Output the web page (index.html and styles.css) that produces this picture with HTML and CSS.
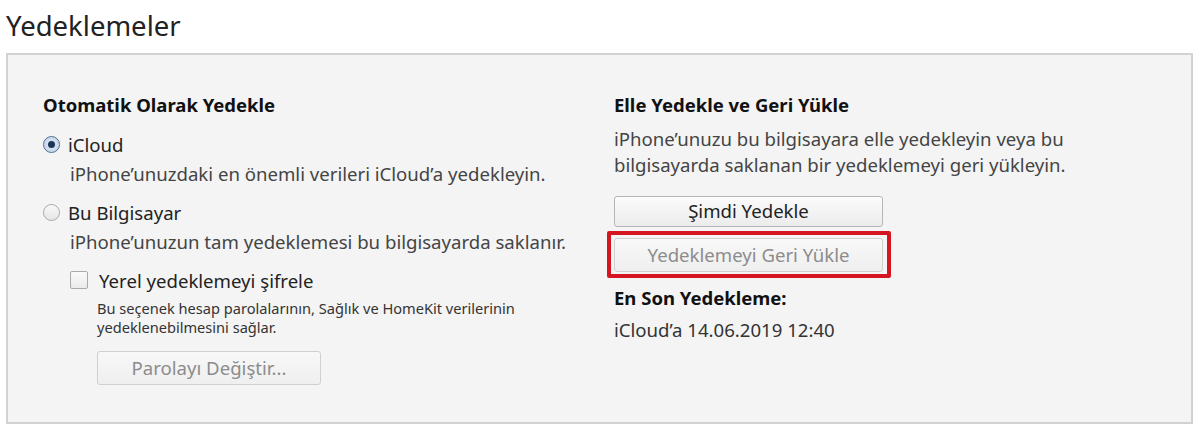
FILE: index.html
```html
<!DOCTYPE html>
<html lang="tr">
<head>
<meta charset="utf-8">
<link rel="stylesheet" href="styles.css">
</head>
<body>
<h1 class="title">Yedeklemeler</h1>
<div class="panel">
  <div class="col left">
    <h2 class="heading">Otomatik Olarak Yedekle</h2>
    <div class="radio-row first">
      <span class="radio checked"><span class="dot"></span></span>
      <span class="label">iCloud</span>
    </div>
    <p class="desc">iPhone’unuzdaki en önemli verileri iCloud’a yedekleyin.</p>
    <div class="radio-row second">
      <span class="radio"></span>
      <span class="label">Bu Bilgisayar</span>
    </div>
    <p class="desc">iPhone’unuzun tam yedeklemesi bu bilgisayarda saklanır.</p>
    <div class="check-row">
      <span class="checkbox"></span>
      <span class="label">Yerel yedeklemeyi şifrele</span>
    </div>
    <p class="small">Bu seçenek hesap parolalarının, Sağlık ve HomeKit verilerinin<br>yedeklenebilmesini sağlar.</p>
    <button class="btn disabled pw">Parolayı Değiştir...</button>
  </div>
  <div class="col right">
    <h2 class="heading">Elle Yedekle ve Geri Yükle</h2>
    <p class="para">iPhone’unuzu bu bilgisayara elle yedekleyin veya bu<br>bilgisayarda saklanan bir yedeklemeyi geri yükleyin.</p>
    <button class="btn wide now">Şimdi Yedekle</button>
    <div class="highlight">
      <button class="btn wide disabled">Yedeklemeyi Geri Yükle</button>
    </div>
    <h2 class="heading last">En Son Yedekleme:</h2>
    <p class="para date">iCloud’a 14.06.2019 12:40</p>
  </div>
</div>
</body>
</html>
```
FILE: styles.css
```css
* { box-sizing: border-box; }
html, body { margin: 0; padding: 0; background: #fff; }
body {
  font-family: "Noto Sans", "Open Sans", sans-serif;
  color: #222;
  width: 1200px;
  height: 434px;
  overflow: hidden;
}
.title {
  margin: 0;
  padding: 8px 0 0 6px;
  height: 44px;
  font-weight: 400;
  font-size: 27.5px;
  line-height: 36px;
  color: #222;
}
.panel {
  margin: 9px 0 0 6px;
  width: 1187px;
  height: 371px;
  background: #f4f4f4;
  border: 2px solid #d2d2d2;
  display: flex;
  padding: 37px 0 0 35px;
}
.col { display: flex; flex-direction: column; align-items: flex-start; }
.left { width: 571px; }
.heading {
  margin: 0;
  font-size: 18.5px;
  font-weight: 700;
  line-height: 26px;
  color: #111;
}
.radio-row, .check-row {
  display: flex;
  align-items: center;
  gap: 8px;
  height: 26px;
}
.radio-row.first { margin-top: 13px; }
.radio-row.second { margin-top: 12px; }
.radio {
  width: 17px; height: 17px;
  border-radius: 50%;
  border: 1px solid #a8a8a8;
  background: linear-gradient(#f8f8f8, #e6e6e6);
  display: flex; align-items: center; justify-content: center;
}
.radio.checked {
  border-color: #4f6f95;
  background: radial-gradient(circle, #dfe9f5 0, #bfd1e6 100%);
}
.dot {
  width: 7px; height: 7px; border-radius: 50%;
  background: #1c3554;
}
.label { font-size: 18.6px; color: #222; }
.desc {
  margin: 4px 0 0 27px;
  font-size: 18.6px;
  line-height: 26px;
  color: #444;
}
.check-row { margin: 12px 0 0 27px; gap: 11px; }
.checkbox {
  width: 18px; height: 18px;
  border: 1px solid #a9a9a9;
  border-radius: 2px;
  background: linear-gradient(#fafafa, #ebebeb);
}
.small {
  margin: 6px 0 0 54px;
  font-size: 14.6px;
  line-height: 19px;
  color: #333;
}
.btn {
  font-family: inherit;
  font-size: 18.6px;
  color: #222;
  border: 1px solid #b5b5b5;
  border-radius: 3px;
  background: linear-gradient(#fbfbfb, #ececec);
  padding: 0;
  line-height: 1;
}
.btn.disabled { color: #8c8c8c; border-color: #d0d0d0; background: linear-gradient(#f8f8f8, #efefef); }
.pw { margin: 14px 0 0 54px; width: 224px; height: 34px; }
.para {
  margin: 8px 0 0 0;
  font-size: 18.6px;
  line-height: 26px;
  color: #444;
}
.wide { width: 269px; }
.now { margin-top: 18px; height: 31px; }
.highlight {
  margin: 4px 0 0 -7px;
  padding: 3px 4px 2px 3px;
  border: 4px solid #d51520;
  border-radius: 2px;
}
.highlight .wide { height: 34px; display: block; }
.heading.last { margin-top: 7px; }
.date { margin-top: 6px; color: #333; }
```
